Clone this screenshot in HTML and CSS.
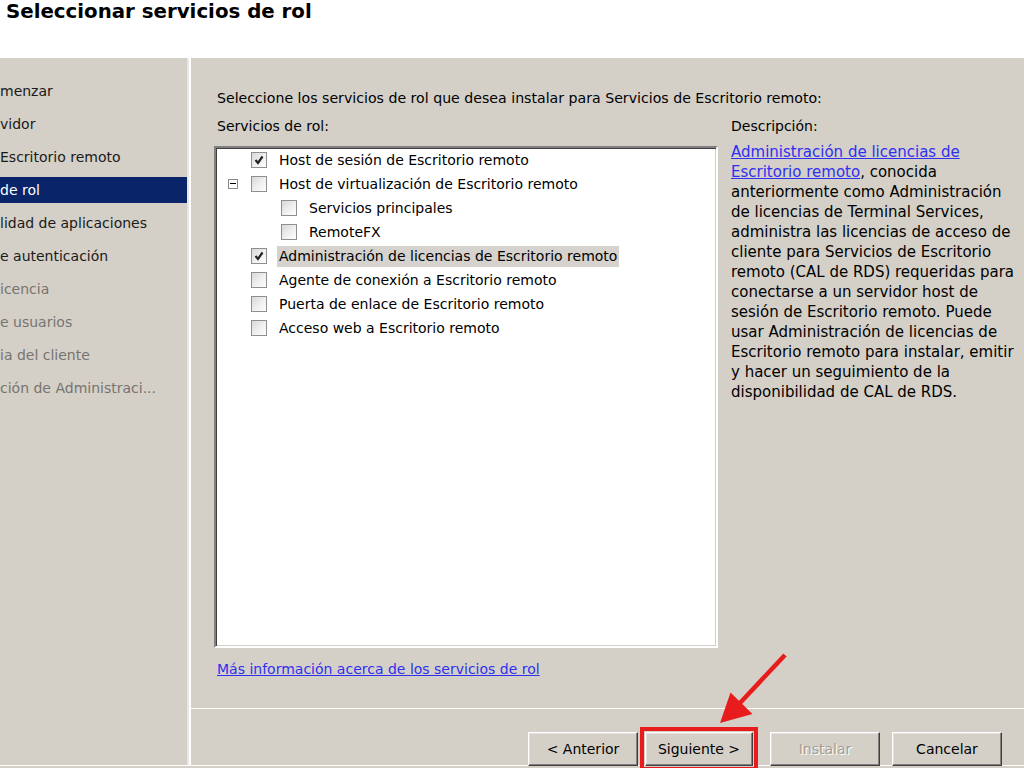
FILE: index.html
```html
<!DOCTYPE html>
<html lang="es">
<head>
    <meta charset="UTF-8">
    <meta name="viewport" content="width=device-width, initial-scale=1.0">
    <title>Seleccionar servicios de rol</title>
    <link rel="stylesheet" href="styles.css">
</head>
<body>

    <div class="wizard">
        <div class="wizard-header">
            <h1>Seleccionar servicios de rol</h1>
        </div>

        <div class="wizard-body">
            <!-- Wizard steps (left side is cut off in the capture) -->
            <ul class="steps">
                <li>menzar</li>
                <li>vidor</li>
                <li>Escritorio remoto</li>
                <li class="active">de rol</li>
                <li>lidad de aplicaciones</li>
                <li>e autenticación</li>
                <li class="disabled">icencia</li>
                <li class="disabled">e usuarios</li>
                <li class="disabled">ia del cliente</li>
                <li class="disabled">ción de Administraci...</li>
            </ul>

            <div class="page">
                <div class="page-main">
                    <p class="intro">Seleccione los servicios de rol que desea instalar para Servicios de Escritorio remoto:</p>

                    <div class="columns">
                        <div class="services">
                            <div class="field-label">Servicios de rol:</div>

                            <div class="tree">
                                <div class="tree-row">
                                    <span class="toggle-slot"></span>
                                    <span class="check checked"><svg viewBox="0 0 14 14"><path d="M3.5 7 L6 10 L10.5 3.5"/></svg></span>
                                    <span class="tree-label">Host de sesión de Escritorio remoto</span>
                                </div>
                                <div class="tree-row">
                                    <span class="toggle-slot"><span class="toggle"></span></span>
                                    <span class="check"></span>
                                    <span class="tree-label">Host de virtualización de Escritorio remoto</span>
                                </div>
                                <div class="tree-row child">
                                    <span class="toggle-slot"></span>
                                    <span class="check"></span>
                                    <span class="tree-label">Servicios principales</span>
                                </div>
                                <div class="tree-row child">
                                    <span class="toggle-slot"></span>
                                    <span class="check"></span>
                                    <span class="tree-label">RemoteFX</span>
                                </div>
                                <div class="tree-row">
                                    <span class="toggle-slot"></span>
                                    <span class="check checked"><svg viewBox="0 0 14 14"><path d="M3.5 7 L6 10 L10.5 3.5"/></svg></span>
                                    <span class="tree-label selected">Administración de licencias de Escritorio remoto</span>
                                </div>
                                <div class="tree-row">
                                    <span class="toggle-slot"></span>
                                    <span class="check"></span>
                                    <span class="tree-label">Agente de conexión a Escritorio remoto</span>
                                </div>
                                <div class="tree-row">
                                    <span class="toggle-slot"></span>
                                    <span class="check"></span>
                                    <span class="tree-label">Puerta de enlace de Escritorio remoto</span>
                                </div>
                                <div class="tree-row">
                                    <span class="toggle-slot"></span>
                                    <span class="check"></span>
                                    <span class="tree-label">Acceso web a Escritorio remoto</span>
                                </div>
                            </div>

                            <a href="#" class="more-link">Más información acerca de los servicios de rol</a>
                        </div>

                        <div class="description">
                            <div class="desc-label">Descripción:</div>
                            <p><a href="#">Administración de licencias de<br>Escritorio remoto</a>, conocida<br>anteriormente como Administración<br>de licencias de Terminal Services,<br>administra las licencias de acceso de<br>cliente para Servicios de Escritorio<br>remoto (CAL de RDS) requeridas para<br>conectarse a un servidor host de<br>sesión de Escritorio remoto. Puede<br>usar Administración de licencias de<br>Escritorio remoto para instalar, emitir<br>y hacer un seguimiento de la<br>disponibilidad de CAL de RDS.</p>
                        </div>
                    </div>
                </div>

                <div class="buttons">
                    <button type="button" class="btn">&lt; Anterior</button>
                    <button type="button" class="btn highlighted">Siguiente &gt;</button>
                    <button type="button" class="btn" disabled>Instalar</button>
                    <button type="button" class="btn">Cancelar</button>
                </div>
            </div>
        </div>
    </div>

    <!-- red annotation arrow -->
    <svg class="arrow" viewBox="0 0 100 100" width="100" height="100">
        <line x1="85" y1="15" x2="40" y2="63" />
        <polygon points="20,83 30.5,52.5 52.5,74" />
    </svg>

</body>
</html>
```

FILE: styles.css
```css
body {
    font-family: "DejaVu Sans", sans-serif;
    font-size: 14px;
    background-color: #d4d0c8;
    color: #000;
    margin: 0;
    padding: 0;
    width: 1024px;
    height: 768px;
    overflow: hidden;
    position: relative;
}

.wizard-header {
    height: 58px;
    background-color: #fff;
}

.wizard-header h1 {
    margin: 0;
    padding: 1px 0 0 6px;
    font-size: 19.8px;
    line-height: 22px;
    font-weight: bold;
}

.wizard-body {
    display: flex;
    height: 707px;
    border-bottom: 1px solid #fff;
}

.steps {
    list-style: none;
    margin: 0;
    padding: 20px 0 0 0;
    width: 187px;
    border-right: 2px solid #e9e7e3;
    white-space: nowrap;
    overflow: hidden;
    font-size: 14px;
}

.steps li {
    height: 26px;
    line-height: 26px;
    margin-bottom: 7px;
    padding-left: 0;
    color: #1a1a1a;
}

.steps li.active {
    background-color: #0a246a;
    color: #fff;
}

.steps li.disabled {
    color: #77746f;
}

.page {
    flex: 1;
    display: flex;
    flex-direction: column;
    border-left: 2px solid #fff;
}

.page-main {
    flex: 1;
    padding: 31px 0 0 23px;
}

.intro {
    margin: 0 0 10px 0;
    padding-left: 3px;
    line-height: 18px;
    white-space: nowrap;
    font-size: 14.15px;
}

.columns {
    display: flex;
}

.services {
    width: 504px;
}

.field-label {
    padding-left: 3px;
    line-height: 18px;
    margin-bottom: 11px;
}

.tree {
    box-sizing: border-box;
    height: 502px;
    background-color: #fff;
    border-style: solid;
    border-width: 2px;
    border-color: #808080 #fff #fff #808080;
    box-shadow: inset 1px 1px 0 #404040, inset -1px -1px 0 #d4d0c8;
}

.tree-row {
    display: flex;
    align-items: center;
    height: 24px;
    padding-left: 12px;
    white-space: nowrap;
}

.toggle-slot {
    width: 23px;
    flex-shrink: 0;
}

.tree-row.child .toggle-slot {
    width: 53px;
}

.toggle {
    display: block;
    position: relative;
    width: 8px;
    height: 8px;
    border: 1px solid #8a8a8a;
    background-color: #fff;
}

.toggle::after {
    content: "";
    position: absolute;
    left: 1px;
    top: 3px;
    width: 6px;
    height: 1px;
    background-color: #000;
}

.check {
    box-sizing: border-box;
    width: 16px;
    height: 16px;
    flex-shrink: 0;
    border: 1px solid #8f8f8f;
    background: linear-gradient(135deg, #d8d8d8 0%, #eeeeee 50%, #fff 100%);
    margin-right: 10px;
}

.check svg {
    display: block;
    width: 14px;
    height: 14px;
}

.check svg path {
    fill: none;
    stroke: #222;
    stroke-width: 2.2;
}

.tree-label {
    padding: 0 2px;
    line-height: 21px;
}

.tree-label.selected {
    background-color: #d6d3ce;
}

.more-link {
    display: inline-block;
    margin-top: 12px;
    padding-left: 3px;
    line-height: 18px;
    color: #2f2ff0;
}

.description {
    margin-left: 13px;
    width: 292px;
    white-space: nowrap;
}

.desc-label {
    line-height: 18px;
    margin-bottom: 7px;
}

.description p {
    margin: 0;
    line-height: 20px;
    font-size: 15px;
}

.description a {
    color: #2f2ff0;
}

.buttons {
    height: 57px;
    border-top: 1px solid #fff;
    display: flex;
    justify-content: flex-end;
    align-items: flex-start;
    padding: 23px 22px 0 0;
    box-sizing: border-box;
}

.btn {
    width: 110px;
    height: 34px;
    margin-left: 12px;
    font-family: inherit;
    font-size: 14px;
    color: #000;
    background-color: #d4d0c8;
    border-style: solid;
    border-width: 1px;
    border-color: #fff #404040 #404040 #fff;
    box-shadow: inset -1px -1px 0 #808080, inset 1px 1px 0 #e4e2de;
    padding: 0;
    cursor: pointer;
}

.btn:first-child {
    margin-left: 0;
}

.btn.highlighted {
    width: 108px;
    margin-left: 7px;
    margin-right: 5px;
    outline: 4px solid #e81c1c;
    outline-offset: 1px;
}

.btn:disabled {
    color: #a19e99;
    text-shadow: 1px 1px 0 #fff;
}

.arrow {
    position: absolute;
    left: 700px;
    top: 640px;
}

.arrow line {
    stroke: #e81c1c;
    stroke-width: 4.5;
}

.arrow polygon {
    fill: #e81c1c;
}
```
